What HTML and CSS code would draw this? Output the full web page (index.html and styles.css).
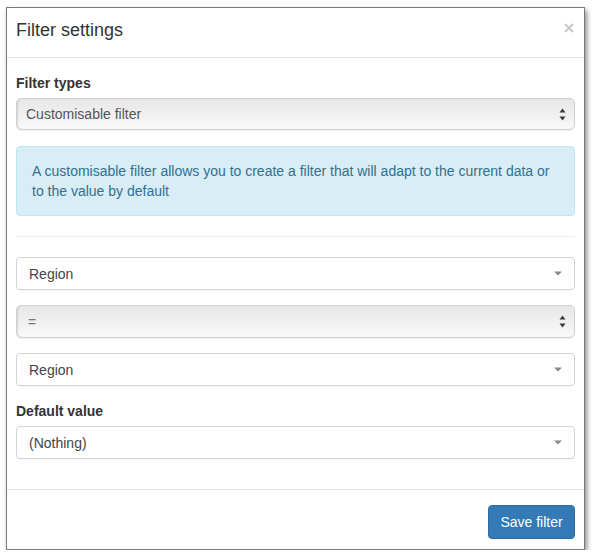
FILE: index.html
```html
<!DOCTYPE html>
<html lang="en">
<head>
<meta charset="utf-8">
<title>Filter settings</title>
<link rel="stylesheet" href="styles.css">
</head>
<body>
<div class="modal">
  <div class="modal-header">
    <h4 class="modal-title">Filter settings</h4>
    <button class="close" type="button" aria-label="Close">
      <svg width="10" height="10" viewBox="0 0 10 10"><path d="M1 1L9 9M9 1L1 9" stroke="#c8c8c8" stroke-width="2" fill="none"/></svg>
    </button>
  </div>
  <div class="modal-body">
    <label class="field-label">Filter types</label>
    <div class="native-select first">
      <span class="value">Customisable filter</span>
      <svg class="updown" width="7" height="13" viewBox="0 0 7 13"><path d="M3.5 0.5L6.5 4.5H0.5Z M3.5 12.5L6.5 8.5H0.5Z" fill="#3a3a3a"/></svg>
    </div>
    <div class="alert-info">A customisable filter allows you to create a filter that will adapt to the current data or to the value by default</div>
    <hr class="divider">
    <div class="chosen">
      <span class="value">Region</span>
      <svg class="caret" width="8" height="5" viewBox="0 0 8 5"><path d="M0 0.5H8L4 4.5Z" fill="#888"/></svg>
    </div>
    <div class="native-select">
      <span class="value eq">=</span>
      <svg class="updown" width="7" height="13" viewBox="0 0 7 13"><path d="M3.5 0.5L6.5 4.5H0.5Z M3.5 12.5L6.5 8.5H0.5Z" fill="#3a3a3a"/></svg>
    </div>
    <div class="chosen">
      <span class="value">Region</span>
      <svg class="caret" width="8" height="5" viewBox="0 0 8 5"><path d="M0 0.5H8L4 4.5Z" fill="#888"/></svg>
    </div>
    <label class="field-label">Default value</label>
    <div class="chosen last">
      <span class="value">(Nothing)</span>
      <svg class="caret" width="8" height="5" viewBox="0 0 8 5"><path d="M0 0.5H8L4 4.5Z" fill="#888"/></svg>
    </div>
  </div>
  <div class="modal-footer">
    <button class="btn-primary" type="button">Save filter</button>
  </div>
</div>
</body>
</html>
```

FILE: styles.css
```css
* { box-sizing: border-box; }

html, body {
  margin: 0;
  padding: 0;
  background: #fff;
}

body {
  font-family: "Liberation Sans", Arial, Helvetica, sans-serif;
  font-size: 14px;
  line-height: 20px;
  color: #333;
}

.modal {
  margin: 7px 0 0 6px;
  width: 579px;
  background: #fff;
  border: 1px solid #7a7a7a;
  box-shadow: 2px 3px 5px rgba(0, 0, 0, 0.45);
}

/* header */
.modal-header {
  display: flex;
  justify-content: space-between;
  align-items: center;
  height: 50px;
  padding: 0 10px 6px 9px;
  border-bottom: 1px solid #e5e5e5;
}

.modal-title {
  margin: 0;
  font-size: 18px;
  font-weight: normal;
  line-height: 20px;
  color: #333;
}

.close {
  display: flex;
  padding: 0;
  margin: -3px 0 0 0;
  border: 0;
  background: none;
}

/* body */
.modal-body {
  padding: 15px 9px 30px;
}

.field-label {
  display: block;
  font-weight: bold;
  line-height: 20px;
  margin-bottom: 5px;
  color: #333;
}

.native-select {
  display: flex;
  align-items: center;
  justify-content: space-between;
  height: 33px;
  padding: 0 8px 0 9px;
  margin-bottom: 15px;
  border: 1px solid #cfcfcf;
  border-radius: 5px;
  background: linear-gradient(to bottom, #e7e7e7 0%, #efefef 45%, #f9f9f9 100%);
  box-shadow: inset 2px 0 2px -1px rgba(0, 0, 0, 0.12), 0 1px 1px rgba(0, 0, 0, 0.06);
  color: #555;
}

.native-select.first {
  height: 32px;
  margin-bottom: 16px;
}

.native-select .eq {
  padding-left: 2px;
  color: #777;
}

.updown { display: block; }

.alert-info {
  height: 70px;
  padding: 14px 15px;
  margin-bottom: 20px;
  background: #d9edf7;
  border: 1px solid #bce8f1;
  border-radius: 4px;
  color: #31708f;
}

.divider {
  margin: 0 0 20px;
  border: 0;
  border-top: 1px solid #eee;
  height: 0;
}

.chosen {
  display: flex;
  align-items: center;
  justify-content: space-between;
  height: 33px;
  padding: 0 12px 0 12px;
  margin-bottom: 15px;
  background: #fff;
  border: 1px solid #d3d3d3;
  border-radius: 4px;
  box-shadow: 0 1px 1px rgba(0, 0, 0, 0.04);
  color: #444;
}

.chosen.last { margin-bottom: 0; }

.caret { display: block; }

/* footer */
.modal-footer {
  display: flex;
  justify-content: flex-end;
  padding: 15px 9px 10px;
  border-top: 1px solid #e5e5e5;
}

.btn-primary {
  width: 87px;
  height: 34px;
  padding: 0;
  font-family: inherit;
  font-size: 14px;
  color: #fff;
  background: #337ab7;
  border: 1px solid #2e6da4;
  border-radius: 4px;
}
```
